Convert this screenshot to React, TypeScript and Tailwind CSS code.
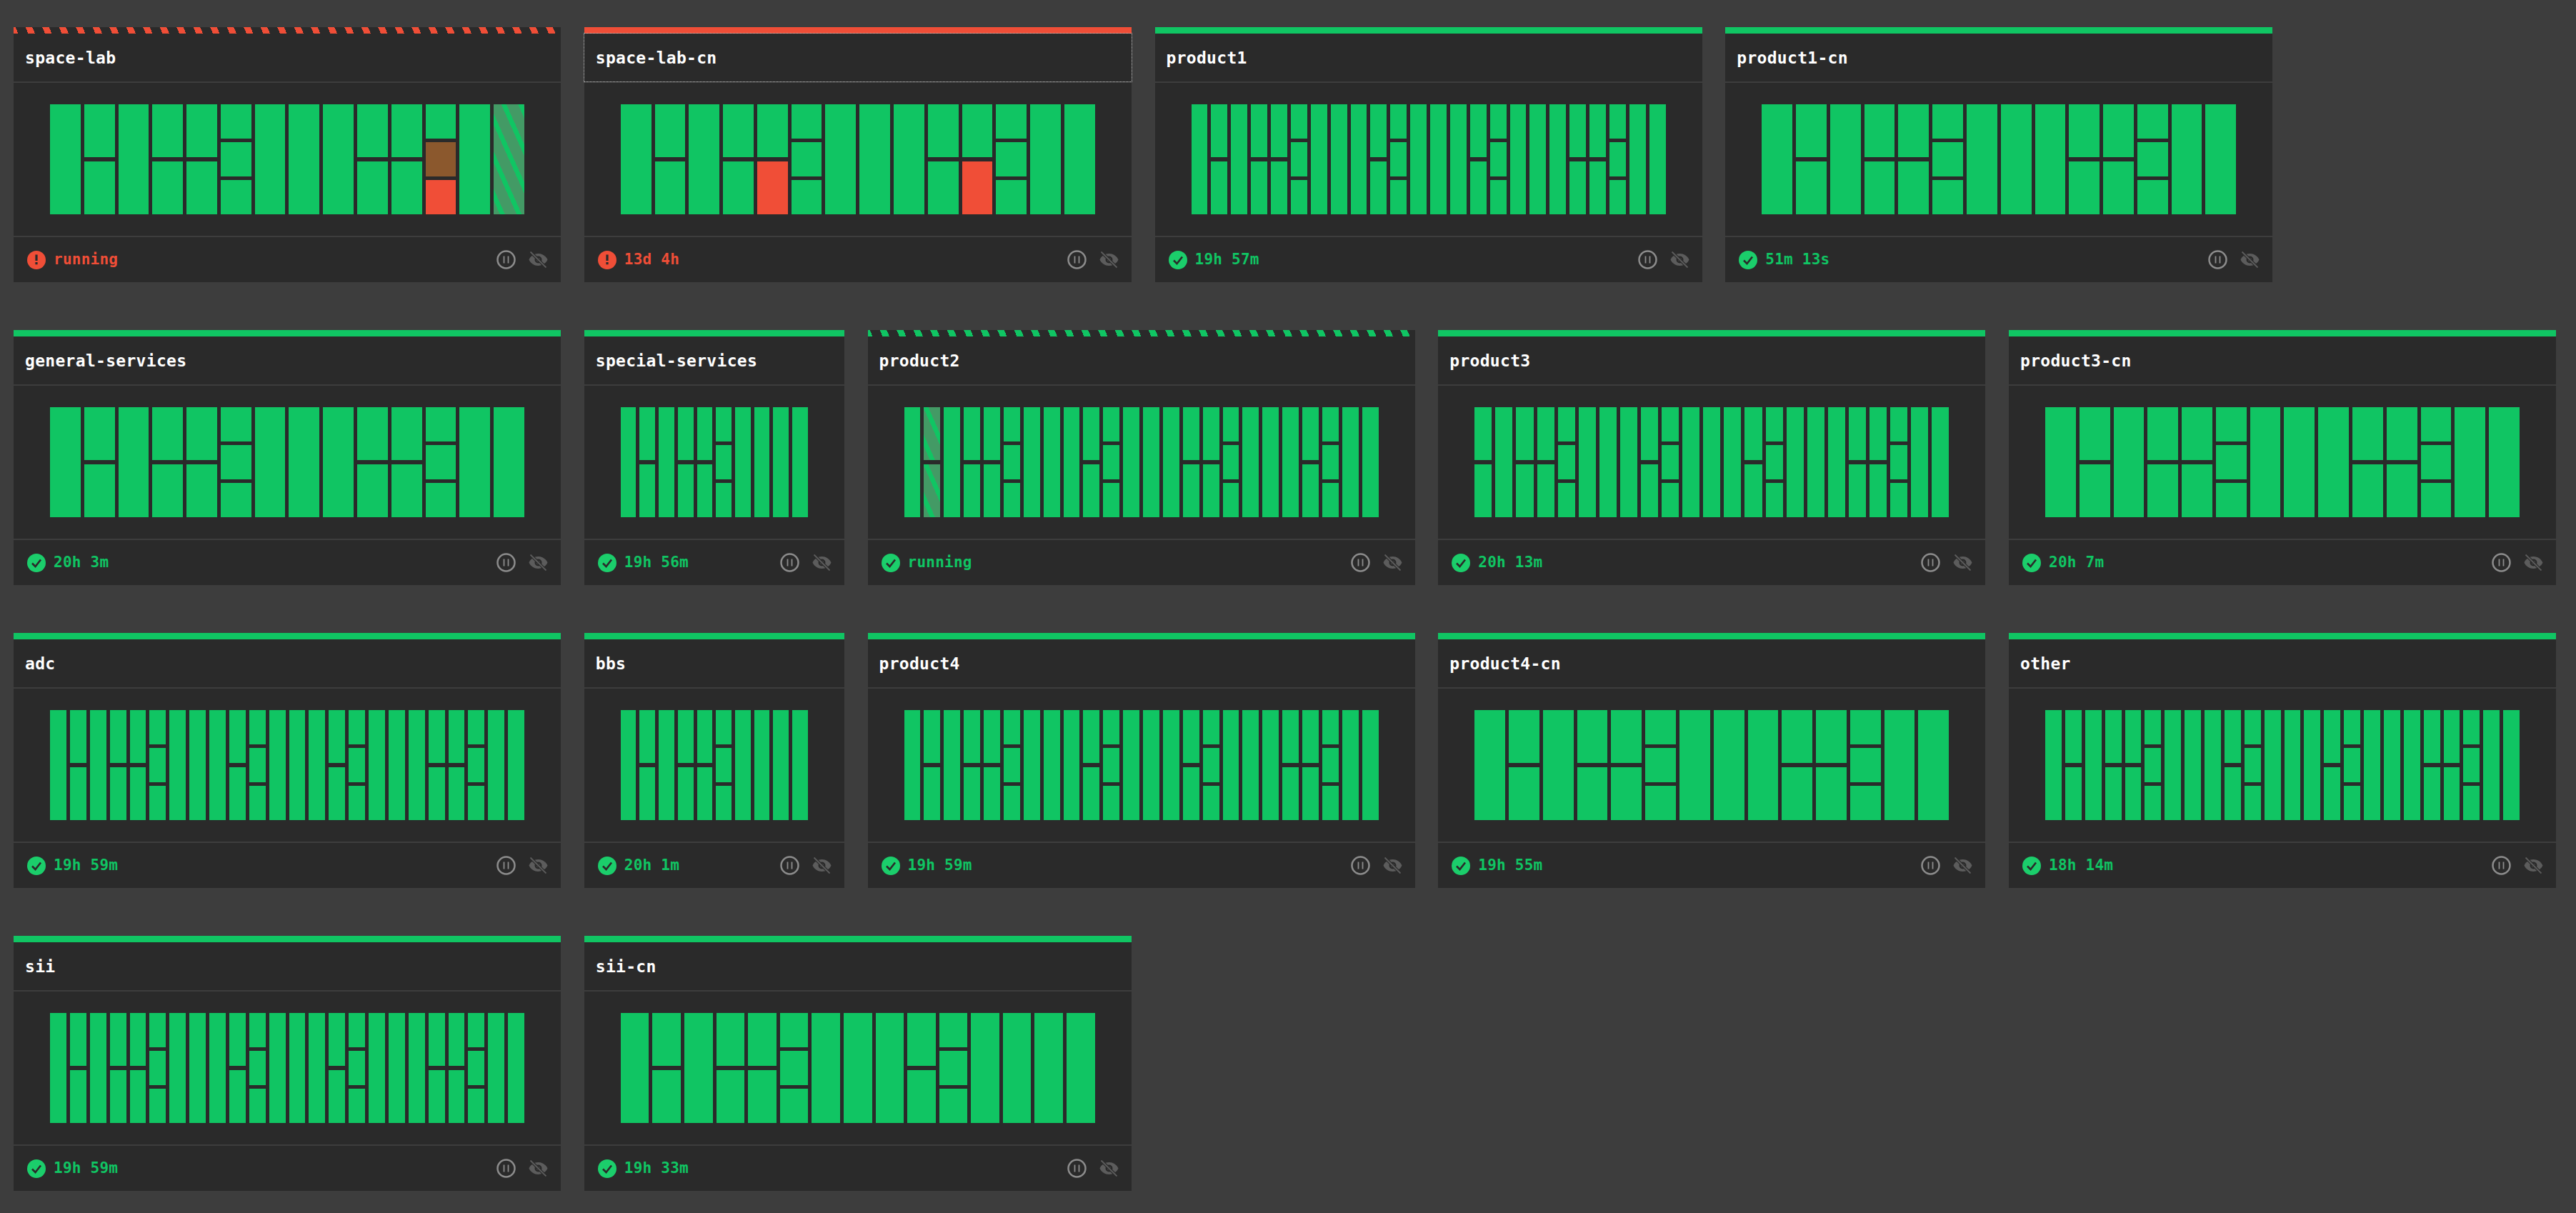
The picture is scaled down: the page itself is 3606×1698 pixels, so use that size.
type CellState = "ok" | "fail" | "warn" | "run"

interface Project {
    name: string
    status: "ok" | "fail"
    time: string
    running?: boolean
    focused?: boolean
    small?: boolean
    cols: number[]
    cells?: Record<string, CellState>
}

const P10 = [1, 2, 1, 2, 2, 3, 1, 1, 1, 1]
const P14 = [1, 2, 1, 2, 2, 3, 1, 1, 1, 2, 2, 3, 1, 1]
const P15 = [1, 2, 1, 2, 2, 3, 1, 1, 1, 2, 3, 1, 1, 1, 1]
const P23 = [2, 1, 2, 2, 3, 1, 1, 1, 2, 3, 1, 1, 1, 2, 3, 1, 1, 1, 2, 2, 3, 1, 1]
const P24 = [1, 2, 1, 2, 2, 3, 1, 1, 1, 2, 3, 1, 1, 1, 2, 3, 1, 1, 1, 2, 2, 3, 1, 1]
const P24B = [1, 2, 1, 2, 2, 3, 1, 1, 1, 2, 3, 1, 1, 1, 2, 2, 3, 1, 1, 1, 2, 3, 1, 1]

const rows: Project[][] = [
    [
        { name: "space-lab", status: "fail", time: "running", running: true, cols: P14, cells: { "11:1": "warn", "11:2": "fail", "13:0": "run" } },
        { name: "space-lab-cn", status: "fail", time: "13d 4h", focused: true, cols: P14, cells: { "4:1": "fail", "10:1": "fail" } },
        { name: "product1", status: "ok", time: "19h 57m", cols: P24 },
        { name: "product1-cn", status: "ok", time: "51m 13s", cols: P14 },
    ],
    [
        { name: "general-services", status: "ok", time: "20h 3m", cols: P14 },
        { name: "special-services", status: "ok", time: "19h 56m", small: true, cols: P10 },
        { name: "product2", status: "ok", time: "running", running: true, cols: P24B, cells: { "1:0": "run", "1:1": "run" } },
        { name: "product3", status: "ok", time: "20h 13m", cols: P23 },
        { name: "product3-cn", status: "ok", time: "20h 7m", cols: P14 },
    ],
    [
        { name: "adc", status: "ok", time: "19h 59m", cols: P24 },
        { name: "bbs", status: "ok", time: "20h 1m", small: true, cols: P10 },
        { name: "product4", status: "ok", time: "19h 59m", cols: P24 },
        { name: "product4-cn", status: "ok", time: "19h 55m", cols: P14 },
        { name: "other", status: "ok", time: "18h 14m", cols: P24 },
    ],
    [
        { name: "sii", status: "ok", time: "19h 59m", cols: P24 },
        { name: "sii-cn", status: "ok", time: "19h 33m", cols: P15 },
    ],
]

const cellClass: Record<CellState, string> = {
    ok: "bg-[#10c563]",
    fail: "bg-[#f04e37]",
    warn: "bg-[#8b582d]",
    run: "bg-[repeating-linear-gradient(66deg,#439a65_0,#439a65_8px,#10c563_8px,#10c563_14.5px,#439a65_14.5px,#439a65_21.47px)]",
}

function CheckIcon() {
    return (
        <svg viewBox="0 0 26 26" className="h-[26px] w-[26px] shrink-0">
            <circle cx="13" cy="13" r="13" fill="#1bce6b" />
            <path d="M7 13.5l4.5 4.5L19 8.5" fill="none" stroke="#2a2a2a" strokeWidth="2.6" />
        </svg>
    )
}

function AlertIcon() {
    return (
        <svg viewBox="0 0 26 26" className="h-[26px] w-[26px] shrink-0">
            <circle cx="13" cy="13" r="13" fill="#f04e37" />
            <rect x="11.4" y="5.5" width="3.2" height="8.5" fill="#2a2a2a" />
            <rect x="11.4" y="16" width="3.2" height="3.2" fill="#2a2a2a" />
        </svg>
    )
}

function PauseIcon() {
    return (
        <svg viewBox="0 0 27 27" className="h-[27px] w-[27px]">
            <circle cx="13.5" cy="13.5" r="12" fill="none" stroke="#8c8c8c" strokeWidth="2.5" />
            <path d="M10.5 8.5v10M16.5 8.5v10" fill="none" stroke="#8c8c8c" strokeWidth="1.8" />
        </svg>
    )
}

function EyeOffIcon() {
    return (
        <svg viewBox="0 0 27 25" className="h-[25px] w-[27px]">
            <path
                fillRule="evenodd"
                fill="#5c5c5c"
                d="M0.5 12.5C3 7 8 4 13.5 4S24 7 26.5 12.5C24 18 19 21 13.5 21S3 18 0.5 12.5ZM13.5 7.5a5 5 0 1 0 0 10a5 5 0 1 0 0-10ZM13.5 10a2.5 2.5 0 1 1 0 5a2.5 2.5 0 1 1 0-5Z"
            />
            <path d="M2.5 1.5L24.5 23.5" stroke="#2a2a2a" strokeWidth="4" />
            <path d="M2.5 1.5L24.5 23.5" stroke="#5c5c5c" strokeWidth="1.8" />
        </svg>
    )
}

function Bars({ project }: { project: Project }) {
    return (
        <div className="flex h-[154px] w-full gap-[5px]">
            {project.cols.map((n, c) => (
                <div key={c} className={n === 2 ? "flex flex-1 flex-col gap-[6px]" : "flex flex-1 flex-col gap-[5px]"}>
                    {Array.from({ length: n }).map((_, i) => (
                        <div key={i} className={`flex-1 ${cellClass[project.cells?.[`${c}:${i}`] ?? "ok"]}`} />
                    ))}
                </div>
            ))}
        </div>
    )
}

function Card({ project }: { project: Project }) {
    const ok = project.status === "ok"
    let topBar = ok ? "bg-[#10c563]" : "bg-[#f04e37]"
    if (project.running) {
        topBar = ok
            ? "bg-[repeating-linear-gradient(66deg,#10c563_0,#10c563_6px,#2a2a2a_6px,#2a2a2a_18.8px,#10c563_18.8px,#10c563_21.47px)]"
            : "bg-[repeating-linear-gradient(66deg,#f04e37_0,#f04e37_6px,#2a2a2a_6px,#2a2a2a_18.8px,#f04e37_18.8px,#f04e37_21.47px)]"
    }

    return (
        <div className={project.small ? "flex w-[364px] shrink-0 flex-col gap-[2px]" : "flex w-[766px] shrink-0 flex-col gap-[2px]"}>
            <div>
                <div className={`h-[9px] ${topBar}`} />
                <div
                    className={
                        project.focused
                            ? "flex h-[67px] items-center bg-[#2a2a2a] px-[16px] pt-[1px] text-[23px] font-bold tracking-[0.3px] text-white outline-1 outline-dotted outline-[#c4c4c4]"
                            : "flex h-[67px] items-center bg-[#2a2a2a] px-[16px] pt-[1px] text-[23px] font-bold tracking-[0.3px] text-white"
                    }
                >
                    {project.name}
                </div>
            </div>
            <div className="flex h-[214px] items-center bg-[#2a2a2a] px-[51px]">
                <Bars project={project} />
            </div>
            <div className="flex h-[63px] items-center bg-[#2a2a2a] pl-[19px] pr-[18px]">
                {ok ? <CheckIcon /> : <AlertIcon />}
                <span className={ok ? "ml-[11px] pt-[1px] text-[21px] font-bold tracking-[0.25px] text-[#10c563]" : "ml-[11px] pt-[1px] text-[21px] font-bold tracking-[0.25px] text-[#f04e37]"}>
                    {project.time}
                </span>
                <div className="ml-auto flex items-center gap-[18px]">
                    <PauseIcon />
                    <EyeOffIcon />
                </div>
            </div>
        </div>
    )
}

export default function App() {
    return (
        <div className="min-h-screen bg-[#3d3d3d] pl-[19px] pt-[38px] font-['DejaVu_Sans_Mono',monospace]">
            <div className="flex flex-col gap-[67px]">
                {rows.map((row, r) => (
                    <div key={r} className="flex gap-[32.75px]">
                        {row.map((project) => (
                            <Card key={project.name} project={project} />
                        ))}
                    </div>
                ))}
            </div>
        </div>
    )
}
